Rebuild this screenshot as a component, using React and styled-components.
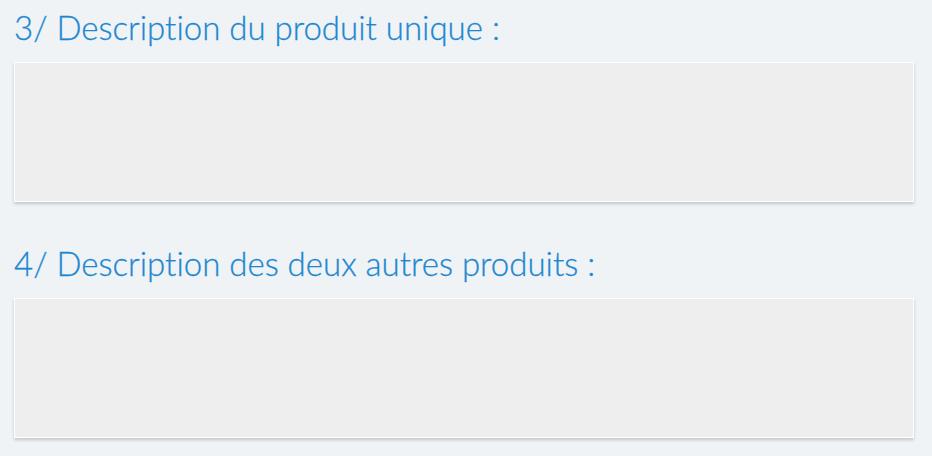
import React from "react";
import styled, { createGlobalStyle } from "styled-components";

const GlobalStyle = createGlobalStyle`
  html, body {
    margin: 0;
    padding: 0;
    background: #eff3f6;
  }
  body {
    font-family: Lato, "Open Sans", sans-serif;
  }
`;

const Page = styled.div`
  width: 932px;
  height: 456px;
  box-sizing: border-box;
  padding: 6px 18px 0 14px;
`;

const Field = styled.div`
  display: flex;
  flex-direction: column;
  margin-bottom: 40px;
`;

const Label = styled.label`
  font-size: 33px;
  font-weight: 300;
  font-variant-ligatures: none;
  color: #1e87d0;
  -webkit-text-stroke: 0.3px #1e87d0;
  line-height: 42px;
  margin-bottom: 14px;
`;

const TextArea = styled.textarea`
  box-sizing: border-box;
  width: 900px;
  height: 140px;
  resize: none;
  border: 1px solid #ffffff;
  background: #eeeeee;
  box-shadow: 0 2px 3px rgba(0, 0, 0, 0.18);
  outline: none;
  font-family: inherit;
  font-size: 16px;
  padding: 8px;
`;

export default function App() {
  return (
    <Page>
      <GlobalStyle />
      <Field>
        <Label>3/ Description du produit unique :</Label>
        <TextArea />
      </Field>
      <Field>
        <Label>4/ Description des deux autres produits :</Label>
        <TextArea />
      </Field>
    </Page>
  );
}
